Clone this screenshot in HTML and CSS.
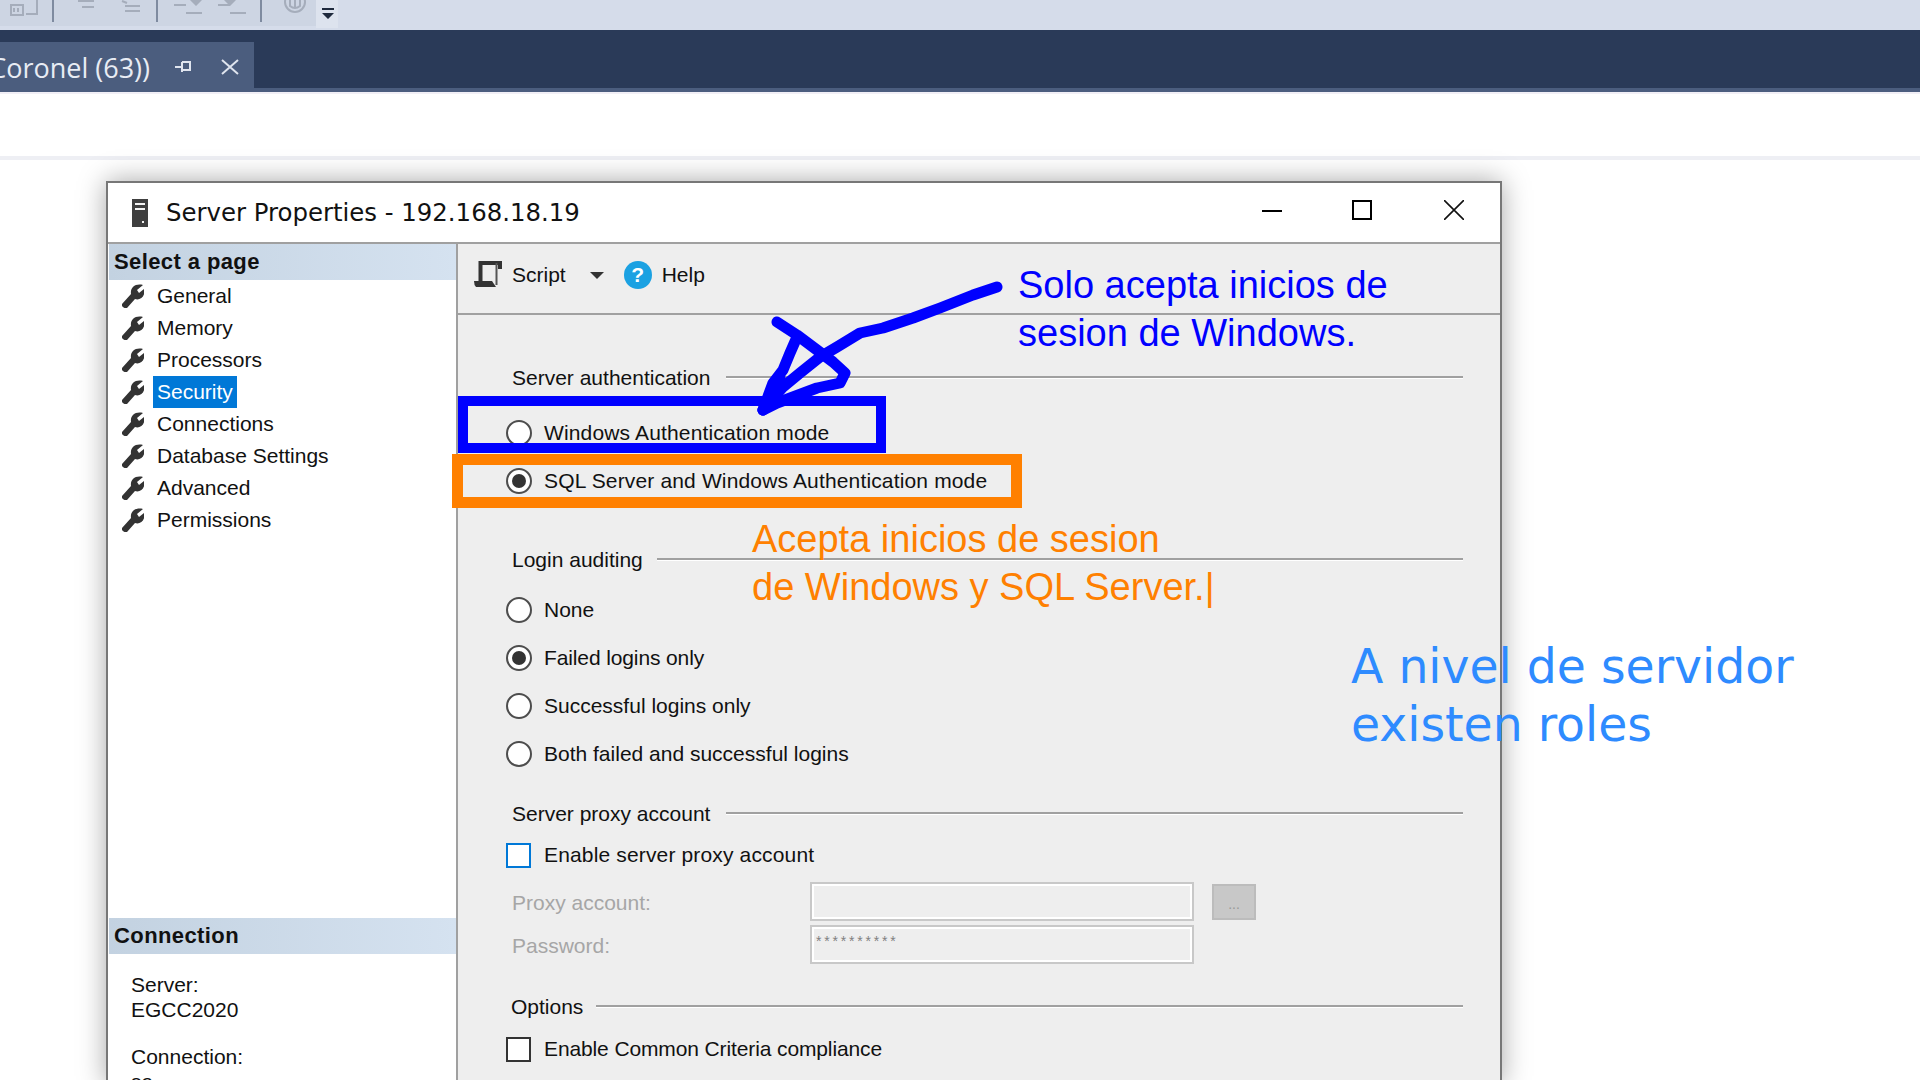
FILE: index.html
```html
<!DOCTYPE html>
<html lang="en">

<head>
    <meta charset="UTF-8">
    <link rel="stylesheet" href="styles.css">
    <title>Server Properties</title>
</head>

<body>
    <div id="toolstrip">
        <svg class="strip-icons" width="316" height="26" viewBox="0 0 316 26">
            <g fill="none" stroke="#a5adbb" stroke-width="2">
                <path d="M11 5h12v10h-12z" />
                <path d="M14 8v4M18 8v4" />
                <path d="M26 14h11v-14" />
                <path d="M78 1h16M82 7h12" />
                <path d="M122 1l5 2M125 6h15M125 11h15" />
                <path d="M174 5h12M186 13h16M218 5h12M230 13h16" />
                <circle cx="295" cy="2" r="10" />
                <path d="M290 0v6q5 4 10 0v-6M295 0v8" />
            </g>
            <g fill="#a5adbb">
                <path d="M190 0h12l-6 6zM224 0h12l-6 6z" />
            </g>
            <path d="M53 0v22M157 0v22M261 0v22" stroke="#7f8ba0" stroke-width="2" />
        </svg>
        <div class="strip-more">
            <svg width="12" height="12" viewBox="0 0 12 12">
                <path d="M0 0h12v2h-12zM0 5h12l-6 6z" fill="#1f2a3d" />
            </svg>
        </div>
    </div>

    <div id="tabbar">
        <div class="tab">
            <span class="tab-name">Coronel (63))</span>
            <svg class="tab-pin" width="18" height="16" viewBox="0 0 18 16">
                <path d="M1 8h7M8 3v10M8 3h8v8h-8" fill="none" stroke="#dfe4ee" stroke-width="2" />
            </svg>
            <svg width="18" height="16" viewBox="0 0 18 16">
                <path d="M1 1l16 14M17 1l-16 14" fill="none" stroke="#dfe4ee" stroke-width="2" />
            </svg>
        </div>
    </div>
    <div id="doc-strip"></div>

    <div id="dialog">
        <div class="titlebar">
            <svg class="server-icon" width="16" height="28" viewBox="0 0 16 28">
                <path d="M0 0h16v28h-16z" fill="#3f3f3f" />
                <path d="M3 4h10v2h-10zM3 9h10v2h-10zM10 22h2v2h-2z" fill="#f4f4f4" />
            </svg>
            <span class="title-text">Server Properties - 192.168.18.19</span>
            <div class="win-buttons">
                <svg width="20" height="20" viewBox="0 0 20 20">
                    <path d="M0 11h20" stroke="#000" stroke-width="2" />
                </svg>
                <svg class="win-max" width="20" height="20" viewBox="0 0 20 20">
                    <path d="M1 1h18v18h-18z" fill="none" stroke="#000" stroke-width="2" />
                </svg>
                <svg width="20" height="20" viewBox="0 0 20 20">
                    <path d="M0 0l20 20M20 0l-20 20" stroke="#111" stroke-width="1.6" />
                </svg>
            </div>
        </div>

        <div class="dialog-body">
            <div class="sidebar">
                <div class="side-head">Select a page</div>
                <ul class="page-list">
                    <li><svg class="wrench" viewBox="0 0 22 24"><use href="#wrench-shape" /></svg><span>General</span></li>
                    <li><svg class="wrench" viewBox="0 0 22 24"><use href="#wrench-shape" /></svg><span>Memory</span></li>
                    <li><svg class="wrench" viewBox="0 0 22 24"><use href="#wrench-shape" /></svg><span>Processors</span></li>
                    <li class="selected"><svg class="wrench" viewBox="0 0 22 24"><use href="#wrench-shape" /></svg><span>Security</span></li>
                    <li><svg class="wrench" viewBox="0 0 22 24"><use href="#wrench-shape" /></svg><span>Connections</span></li>
                    <li><svg class="wrench" viewBox="0 0 22 24"><use href="#wrench-shape" /></svg><span>Database Settings</span></li>
                    <li><svg class="wrench" viewBox="0 0 22 24"><use href="#wrench-shape" /></svg><span>Advanced</span></li>
                    <li><svg class="wrench" viewBox="0 0 22 24"><use href="#wrench-shape" /></svg><span>Permissions</span></li>
                </ul>
                <div class="side-head">Connection</div>
                <div class="conn-info">
                    <p>Server:<br>EGCC2020</p>
                    <p>Connection:<br>sa</p>
                </div>
            </div>

            <div class="pane">
                <div class="pane-tools">
                    <svg width="30" height="28" viewBox="0 0 30 28">
                        <path d="M6.5 20v-18h21.5M26 2v6" fill="none" stroke="#333" stroke-width="4" />
                        <path d="M22.5 2v22" fill="none" stroke="#555" stroke-width="2" />
                        <path d="M0 20h18l4 6h-20q-2 -2 -2 -6z" fill="#333" />
                    </svg>
                    <span class="tool-label">Script</span>
                    <span class="tool-caret"></span>
                    <span class="help-dot">?</span>
                    <span>Help</span>
                </div>

                <div class="pane-form">
                    <div class="group-title"><span>Server authentication</span><i></i></div>
                    <div class="group-rows">
                        <div class="opt wide"><span class="radio"></span>Windows Authentication mode</div>
                        <div class="opt wide"><span class="radio on"></span>SQL Server and Windows Authentication mode</div>
                    </div>

                    <div class="group-title login-title"><span>Login auditing</span><i></i></div>
                    <div class="group-rows login-rows">
                        <div class="opt"><span class="radio"></span>None</div>
                        <div class="opt tight"><span class="radio on"></span>Failed logins only</div>
                        <div class="opt"><span class="radio"></span>Successful logins only</div>
                        <div class="opt"><span class="radio"></span>Both failed and successful logins</div>
                    </div>

                    <div class="group-title proxy-title"><span>Server proxy account</span><i></i></div>
                    <div class="check-row proxy-check wide"><span class="check focus"></span>Enable server proxy account</div>
                    <div class="proxy-fields">
                        <label>Proxy account:</label>
                        <div class="fake-input"></div>
                        <div class="fake-btn">...</div>
                        <label>Password:</label>
                        <div class="fake-input">**********</div>
                    </div>

                    <div class="group-title options-title"><span>Options</span><i></i></div>
                    <div class="check-row options-check tight"><span class="check"></span>Enable Common Criteria compliance</div>
                </div>
            </div>
        </div>
    </div>

    <!-- drawn on top of the screenshot -->
    <div class="mark mark-blue"></div>
    <div class="mark mark-orange"></div>
    <svg class="scribble" width="1920" height="1080" viewBox="0 0 1920 1080">
        <path d="M997 287L973 295L940 308L913 318L883 328L860 333L837 347L820 357L800 373L783 387L763 410" />
        <path d="M777 322L797 335L817 350L833 362L845 373L840 383L817 388L793 397L777 403L763 410" />
        <path d="M797 337L790 353L783 370L773 383L763 410" />
        <path d="M780 378L770 400" />
    </svg>
    <div class="note note-blue">Solo acepta inicios de<br>sesion de Windows.</div>
    <div class="note note-orange">Acepta inicios de sesion<br>de Windows y SQL Server.|</div>
    <div class="note note-sky">A nivel de servidor<br>existen roles</div>

    <svg width="0" height="0" class="defs">
        <defs>
            <path id="wrench-shape" d="M0 20L9 10C8 4 13 -1 21 1L15 6L17 9L22 5C24 12 18 17 13 15L5 24C2 25 -1 22 0 20Z" fill="#333" />
        </defs>
    </svg>
</body>

</html>
```

FILE: styles.css
```css
html,
body {
    margin: 0;
    height: 1080px;
    overflow: hidden;
}

body {
    position: relative;
    background-color: white;
    font-family: "Liberation Sans", sans-serif;
    font-size: 21px;
    color: #111;
}

#toolstrip {
    display: flex;
    height: 30px;
    background-color: #d5dcea;
}

.strip-icons {
    display: block;
    background-color: #cdd5e3;
}

.strip-more {
    width: 22px;
    height: 28px;
    padding: 8px 0 0 6px;
    box-sizing: border-box;
    background-color: #dde3ee;
}

.strip-more svg {
    display: block;
}

#tabbar {
    height: 46px;
    padding-top: 12px;
    background-color: #2a3a58;
    border-bottom: 4px solid #4b5d7e;
}

.tab {
    display: flex;
    align-items: center;
    justify-content: flex-end;
    width: 254px;
    height: 46px;
    padding: 4px 15px 0 0;
    box-sizing: border-box;
    background-color: #4b5d7e;
    color: #e8ecf4;
    white-space: nowrap;
    overflow: hidden;
}

.tab svg {
    flex-shrink: 0;
}

.tab-name {
    flex-shrink: 0;
    font-family: "Open Sans", sans-serif;
    font-size: 27px;
    margin-right: 24px;
}

.tab-pin {
    margin-right: 29px;
}

#doc-strip {
    height: 62px;
    border-top: 2px solid #f1eff6;
    border-bottom: 4px solid #eeeff4;
}

#dialog {
    width: 1392px;
    height: 900px;
    margin: 21px 0 0 106px;
    background-color: white;
    border: 2px solid #777;
    box-shadow: 0 0 26px rgba(0, 0, 0, 0.35);
}

.titlebar {
    display: flex;
    align-items: center;
    height: 59px;
    padding: 0 36px 0 24px;
    border-bottom: 2px solid #a0a0a0;
}

.server-icon {
    margin-right: 18px;
}

.title-text {
    font-family: "DejaVu Sans", sans-serif;
    font-size: 24.4px;
    flex: 1;
}

.win-buttons {
    display: flex;
    gap: 70px;
    margin-bottom: 6px;
}

.win-buttons svg {
    display: block;
}

.win-buttons .win-max {
    margin-right: 2px;
}

.dialog-body {
    display: flex;
    height: 840px;
}

.sidebar {
    width: 347px;
    margin-left: 1px;
    background-color: white;
    border-right: 2px solid #a0a0a0;
}

.side-head {
    height: 36px;
    line-height: 36px;
    padding-left: 5px;
    font-size: 22px;
    font-weight: bold;
    letter-spacing: 0.4px;
    background: linear-gradient(90deg, #c3d2e1, #d5e2f0);
}

.page-list {
    height: 638px;
    margin: 0;
    padding: 0;
    box-sizing: border-box;
    list-style: none;
}

.page-list li {
    display: flex;
    align-items: center;
    height: 32px;
    padding-left: 13px;
}

.wrench {
    width: 22px;
    height: 24px;
    margin-right: 9px;
}

.page-list span {
    padding: 0 4px;
    line-height: 32px;
}

.selected span {
    background-color: #0078d7;
    color: white;
}

.conn-info {
    padding: 18px 0 0 22px;
    line-height: 25px;
}

.conn-info p {
    margin: 0 0 22px;
}

.pane {
    flex: 1;
    background-color: #eeeeee;
}

.pane-tools {
    display: flex;
    align-items: center;
    height: 71px;
    padding: 0 0 7px 16px;
    box-sizing: border-box;
    border-bottom: 2px solid #a0a0a0;
}

.tool-label {
    margin-left: 8px;
}

.tool-caret {
    width: 0;
    height: 0;
    margin: 0 20px 0 24px;
    border-top: 7px solid #333;
    border-left: 7px solid transparent;
    border-right: 7px solid transparent;
}

.help-dot {
    width: 28px;
    height: 28px;
    margin-right: 10px;
    border-radius: 50%;
    background-color: #1ba1e2;
    color: white;
    font-weight: bold;
    line-height: 28px;
    text-align: center;
}

.pane-form {
    padding: 48px 37px 0 54px;
}

.group-title {
    display: flex;
    align-items: center;
    gap: 16px;
    height: 30px;
}

.group-title i {
    flex: 1;
    height: 2px;
    margin-top: -2px;
    background-color: #a0a0a0;
    box-shadow: 0 1px 0 white;
}

.login-title {
    margin-top: 40px;
    gap: 14px;
}

.proxy-title {
    margin-top: 21px;
}

.options-title {
    margin-top: 28px;
    margin-left: -1px;
    gap: 13px;
}

.group-rows {
    margin: 16px 0 0 -6px;
}

.login-rows {
    margin-top: 11px;
}

.opt {
    display: flex;
    align-items: center;
    gap: 12px;
    height: 48px;
}

.wide {
    letter-spacing: 0.15px;
}

.tight {
    letter-spacing: -0.12px;
}

.radio {
    position: relative;
    width: 26px;
    height: 26px;
    box-sizing: border-box;
    border: 2px solid #4d4d4d;
    border-radius: 50%;
    background-color: white;
}

.radio.on::after {
    content: "";
    position: absolute;
    top: 4px;
    left: 4px;
    width: 14px;
    height: 14px;
    border-radius: 50%;
    background-color: #333;
}

.check-row {
    display: flex;
    align-items: center;
    gap: 13px;
    height: 32px;
    margin-left: -6px;
}

.proxy-check {
    margin-top: 10px;
}

.options-check {
    margin-top: 11px;
}

.check {
    width: 25px;
    height: 25px;
    box-sizing: border-box;
    background-color: white;
    border: 2px solid #333;
}

.check.focus {
    border-color: #0078d7;
}

.proxy-fields {
    display: grid;
    grid-template-columns: 298px 384px 44px;
    row-gap: 4px;
    margin-top: 11px;
    align-items: center;
    color: #a6a6a6;
}

.proxy-fields label {
    padding-top: 3px;
}

.fake-input {
    height: 39px;
    box-sizing: border-box;
    padding: 0 0 0 4px;
    border: 2px solid #c8c8c8;
    box-shadow: inset 0 0 0 2px white;
    color: #808080;
    font-size: 14px;
    letter-spacing: 2.8px;
    line-height: 28px;
}

.fake-btn {
    width: 44px;
    height: 36px;
    margin-left: 18px;
    background-color: #c8c8c8;
    border: 2px solid #bcbcbc;
    box-sizing: border-box;
    color: #999;
    font-size: 14px;
    line-height: 36px;
    text-align: center;
}

.mark {
    position: absolute;
    box-sizing: border-box;
}

.mark-blue {
    left: 458px;
    top: 396px;
    width: 428px;
    height: 57px;
    border: 10px solid #0000ff;
}

.mark-orange {
    left: 452px;
    top: 454px;
    width: 570px;
    height: 54px;
    border: 11px solid #ff8000;
}

.scribble {
    position: absolute;
    left: 0;
    top: 0;
}

.scribble path {
    fill: none;
    stroke: #0000ff;
    stroke-width: 11;
    stroke-linecap: round;
    stroke-linejoin: round;
}

.note {
    position: absolute;
    white-space: nowrap;
}

.note-blue {
    left: 1018px;
    top: 261px;
    font-size: 38px;
    line-height: 48px;
    color: #0000ff;
}

.note-orange {
    left: 752px;
    top: 515px;
    font-size: 38px;
    line-height: 48px;
    color: #ff8000;
}

.note-sky {
    left: 1351px;
    top: 638px;
    font-family: "DejaVu Sans", sans-serif;
    font-size: 47.3px;
    line-height: 58px;
    color: #2e8bff;
}

.defs {
    position: absolute;
}
```
